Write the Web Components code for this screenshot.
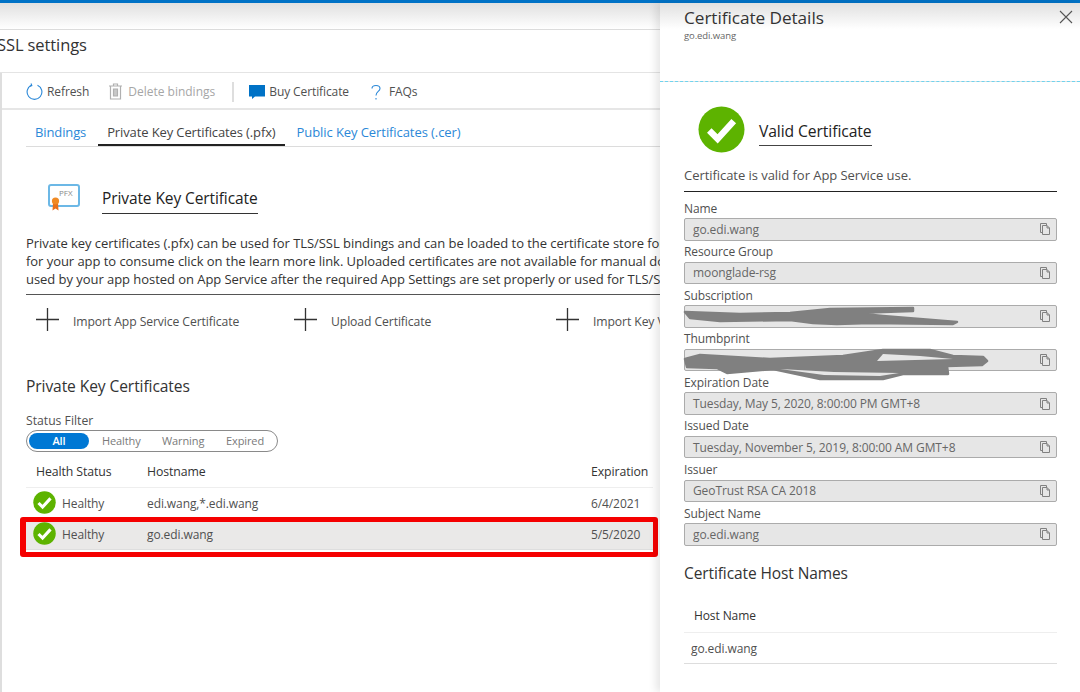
<!DOCTYPE html>
<html>
<head>
<meta charset="utf-8">
<style>
  html, body { margin: 0; height: 100%; overflow: hidden; }
  body { font-family: "Open Sans", "Liberation Sans", sans-serif; color: #3c3c3c; background: #fff; }
</style>
</head>
<body>
<ssl-app>
  <ssl-blade slot="left"></ssl-blade>
  <cert-panel slot="right"></cert-panel>
</ssl-app>

<script>
const CHECK = (size) => `<svg width="${size}" height="${size}" viewBox="0 0 48 48"><circle cx="24" cy="24" r="23.5" fill="#5db300"/><path d="M11.5 25 L20 33.5 L36.5 15.5" fill="none" stroke="#fff" stroke-width="6.5"/></svg>`;
const PLUS = `<svg width="25" height="25" viewBox="0 0 25 25"><path d="M12.500 1V24M1 12.500H24" stroke="#333" stroke-width="1.3" fill="none"/></svg>`;
const COPY = `<svg width="12" height="14" viewBox="0 0 12 14" fill="none" stroke="#808080" stroke-width="1"><path d="M7.5 3.5V1.5H1.5V10.5H3.5"/><path d="M3.5 3.5H8L10.5 6V12.5H3.5Z"/><path d="M8 3.5V6H10.5"/></svg>`;

class SslApp extends HTMLElement {
  constructor() {
    super();
    this.attachShadow({ mode: "open" });
    this.shadowRoot.innerHTML = `
      <style>
        :host { display: flex; flex-direction: column; width: 1080px; height: 692px; overflow: hidden; }
        #topbar { height: 3px; background: #0072c6; flex: none; }
        #main { display: flex; flex: 1; min-height: 0; }
        #left { width: 660px; flex: none; overflow: hidden; }
        #right { width: 420px; flex: none; box-shadow: -4px 0 8px rgba(0,0,0,.1); position: relative; background: #fff; }
      </style>
      <div id="topbar"></div>
      <div id="main">
        <div id="left"><slot name="left"></slot></div>
        <div id="right"><slot name="right"></slot></div>
      </div>
    `;
  }
}

class ToolButton extends HTMLElement {
  constructor() {
    super();
    this.attachShadow({ mode: "open" });
    this.shadowRoot.innerHTML = `
      <style>
        :host { display: flex; align-items: center; gap: 4px; font-size: 12px; letter-spacing: -.1px; color: #505050; white-space: nowrap; }
        :host([disabled]) { color: #a6a6a6; gap: 6px; letter-spacing: 0; }
      </style>
      <slot name="icon"></slot><slot></slot>
    `;
  }
}

class SslTabs extends HTMLElement {
  constructor() {
    super();
    this.attachShadow({ mode: "open" });
    this.shadowRoot.innerHTML = `
      <style>
        :host { display: flex; margin-left: 24px; border-bottom: 1px solid #dcdcdc; height: 36px; font-size: 13px; letter-spacing: -.12px; white-space: nowrap; }
        a { color: #2b88d8; padding: 0 9px 0 9px; line-height: 45px; height: 36px; box-sizing: border-box; }
        a:first-of-type { padding-right: 12px; }
        a.on { color: #444; border-bottom: 2px solid #222; }
        a:last-of-type { padding-left: 12px; letter-spacing: -.08px; }
      </style>
      <a>Bindings</a><a class="on">Private Key Certificates (.pfx)</a><a>Public Key Certificates (.cer)</a>
    `;
  }
}

class AddAction extends HTMLElement {
  constructor() {
    super();
    this.attachShadow({ mode: "open" });
    this.shadowRoot.innerHTML = `
      <style>
        :host { display: flex; align-items: center; gap: 13px; font-size: 12.2px; letter-spacing: -.1px; color: #505050; white-space: nowrap; }
        svg { display: block; }
        span { padding-top: 4px; }
      </style>
      ${PLUS}<span><slot></slot></span>
    `;
  }
}

class StatusFilter extends HTMLElement {
  constructor() {
    super();
    this.attachShadow({ mode: "open" });
    this.shadowRoot.innerHTML = `
      <style>
        :host { display: flex; align-items: center; box-sizing: border-box; width: 252px; height: 22px; border: 1px solid #8a8a8a; border-radius: 11px; padding: 0 2px; font-size: 11px; letter-spacing: -.1px; color: #7a7a7a; }
        b { width: 60px; height: 16px; border-radius: 8px; background: #0078d4; color: #fff; font-weight: 600; text-align: center; line-height: 16px; margin-right: 13px; }
        span { margin-top: -1px; }
        span:nth-of-type(1) { width: 60px; }
        span:nth-of-type(2) { width: 64px; }
      </style>
      <b>All</b><span>Healthy</span><span>Warning</span><span>Expired</span>
    `;
  }
}

class CertRow extends HTMLElement {
  constructor() {
    super();
    this.attachShadow({ mode: "open" });
    this.shadowRoot.innerHTML = `
      <style>
        :host { display: grid; grid-template-columns: 121px 444px 1fr; align-items: center; height: 31px; border-bottom: 1px solid #eee; margin-left: 24px; width: 627px; box-sizing: border-box; font-size: 12px; letter-spacing: -.1px; color: #505050; white-space: nowrap; position: relative; }
        :host([selected]) { background: #eae9e8; border-bottom-color: #dedede; }
        #status { display: flex; align-items: center; gap: 6px; padding-left: 7px; }
        svg { display: block; margin-top: -2px; }
        #mark { display: none; position: absolute; left: -6.5px; top: -2px; width: 638.5px; height: 40px; box-sizing: border-box; border: 5px solid #f50000; border-left-width: 6px; border-radius: 3px; }
        :host([selected]) #mark { display: block; }
      </style>
      <div id="status">${CHECK(23)}<span>Healthy</span></div>
      <div>${this.getAttribute("host")}</div>
      <div>${this.getAttribute("exp")}</div>
      <div id="mark"></div>
    `;
  }
}

class SslBlade extends HTMLElement {
  constructor() {
    super();
    this.attachShadow({ mode: "open" });
    this.shadowRoot.innerHTML = `
      <style>
        :host { display: block; height: 689px; }
        #gradient { height: 26px; background: linear-gradient(#e0e0e0, #fff); border-bottom: 1px solid #dcdcdc; }
        h1 { margin: 0 0 0 -3px; font-size: 16.5px; font-weight: 400; letter-spacing: -.1px; color: #333; height: 42px; line-height: 29px; border-bottom: 1px solid #e4e4e4; white-space: nowrap; }
        #body { border-left: 2px solid #dedede; height: 620px; }
        #toolbar { display: flex; align-items: center; box-sizing: content-box; height: 33px; padding: 2px 0 0 24px; border-bottom: 2px solid #e6e6e6; }
        #sep { width: 2px; height: 20px; background: #dedede; margin: 0 15px 0 17px; }
        ssl-tool + ssl-tool { margin-left: 20px; }
        #sep + ssl-tool { margin-left: 0; }
        #heading { display: flex; align-items: center; margin: 26px 0 0 46px; height: 50px; gap: 22px; }
        h2 { margin: 5px 0 0; font-size: 15.5px; font-weight: 400; letter-spacing: -.1px; color: #222; border-bottom: 1px solid #333; padding-bottom: 4px; line-height: 22px; white-space: nowrap; }
        #desc { margin: 11px 0 0 24px; font-size: 13px; line-height: 18px; letter-spacing: -.05px; color: #333; white-space: nowrap; border-bottom: 1px solid #555; padding-bottom: 6px; height: 54px; box-sizing: content-box; }
        #actions { display: grid; grid-template-columns: 258px 262px 1fr; margin: 12px 0 0 33px; height: 25px; }
        h3 { margin: 43px 0 0 24px; font-size: 15.6px; font-weight: 400; letter-spacing: -.1px; color: #333; line-height: 22px; }
        #label { margin: 17px 0 0 24px; font-size: 12.2px; line-height: 14px; color: #505050; }
        status-filter { margin: 2px 0 0 24px; }
        #heads { display: grid; grid-template-columns: 111px 444px 1fr; margin: 0 0 0 24px; width: 627px; padding: 11px 0 0 10px; box-sizing: border-box; height: 36px; line-height: 18px; font-size: 12.3px; letter-spacing: -.1px; color: #333; border-bottom: 1px solid #eee; white-space: nowrap; }
      </style>
      <div id="gradient"></div>
      <h1>SSL settings</h1>
      <div id="body">
        <div id="toolbar">
          <ssl-tool><svg slot="icon" width="17" height="17" viewBox="0 0 17 17" fill="none" stroke="#2b88d8" stroke-width="1.1"><path d="M5.5 2.2A7.4 7.4 0 1 0 11.5 2.2"/><path d="M5 .5L5.8 2.6L3.6 3.2"/></svg>Refresh</ssl-tool>
          <ssl-tool disabled><svg slot="icon" width="13" height="17" viewBox="0 0 13 17" fill="none" stroke="#b0b0b0" stroke-width="1.2"><path d="M0 3H13M4.500 3V1H8.500V3M1.500 3V16H11.500V3"/><path d="M4.500 6H8.500V13H4.500Z" fill="#c8c8c8"/></svg>Delete bindings</ssl-tool>
          <div id="sep"></div>
          <ssl-tool><svg slot="icon" width="16" height="16" viewBox="0 0 16 16"><path d="M0 1H16V12.5H6L3 15V12.5H0Z" fill="#0072c6"/></svg>Buy Certificate</ssl-tool>
          <ssl-tool><svg slot="icon" width="14" height="16" viewBox="0 0 14 16" fill="none" stroke="#2b88d8" stroke-width="1.1"><path d="M3 4.5C3 .5 11 .5 11 4.5C11 7.5 7 7.5 7 11.5"/><path d="M7 14V15.5"/></svg><span style="margin-left:2px">FAQs</span></ssl-tool>
        </div>
        <ssl-tabs></ssl-tabs>
        <div id="heading">
          <svg width="32" height="28" viewBox="0 0 32 28"><rect x="1" y="1" width="30" height="21" rx="2" fill="#fff" stroke="#6cb8e6" stroke-width="2"/><text x="11" y="12" font-size="8" fill="#8a8a8a" font-family="Open Sans">PFX</text><path d="M5 19L4.500 26.500L7.500 24.500L10.500 26.500L10 19Z" fill="#e8701a"/><circle cx="7.500" cy="17" r="3.600" fill="#f08a24"/></svg>
          <h2>Private Key Certificate</h2>
        </div>
        <div id="desc">Private key certificates (.pfx) can be used for TLS/SSL bindings and can be loaded to the certificate store for<br>for your app to consume click on the learn more link. Uploaded certificates are not available for manual down<br>used by your app hosted on App Service after the required App Settings are set properly or used for TLS/SSL</div>
        <div id="actions">
          <add-action>Import App Service Certificate</add-action>
          <add-action>Upload Certificate</add-action>
          <add-action>Import Key Vault</add-action>
        </div>
        <h3>Private Key Certificates</h3>
        <div id="label">Status Filter</div>
        <status-filter></status-filter>
        <div id="heads"><div>Health Status</div><div>Hostname</div><div>Expiration</div></div>
        <cert-row host="edi.wang,*.edi.wang" exp="6/4/2021"></cert-row>
        <cert-row host="go.edi.wang" exp="5/5/2020" selected></cert-row>
      </div>
    `;
  }
}

class CertField extends HTMLElement {
  constructor() {
    super();
    this.attachShadow({ mode: "open" });
    const scribble = this.getAttribute("scribble");
    this.shadowRoot.innerHTML = `
      <style>
        :host { display: block; height: 43.6px; font-size: 12px; letter-spacing: -.1px; color: #505050; }
        #label { height: 20.5px; line-height: 22px; }
        #box { position: relative; display: flex; align-items: center; justify-content: space-between; box-sizing: border-box; height: 22.500px; background: #e6e6e6; border: 1px solid #ababab; border-radius: 2px; padding: 0 5px 0 8px; color: #666; }
        svg.copy { display: block; }
        svg.scribble { position: absolute; left: -1px; top: -1px; overflow: visible; }
      </style>
      <div id="label">${this.getAttribute("label")}</div>
      <div id="box"><span>${this.getAttribute("value") || ""}</span>${COPY.replace("<svg", '<svg class="copy"')}${scribble ? `<svg class="scribble" width="310" height="32" viewBox="0 0 310 32" fill="#808080" stroke="#808080" stroke-width="2.5" stroke-linejoin="round">${scribble}</svg>` : ""}</div>
    `;
  }
}

class CertPanel extends HTMLElement {
  constructor() {
    super();
    this.attachShadow({ mode: "open" });
    this.shadowRoot.innerHTML = `
      <style>
        :host { display: block; height: 689px; overflow: hidden; background: #fff; }
        #head { position: relative; height: 78px; padding-left: 24px; border-bottom: 1px dashed #6fd3ee; background: linear-gradient(#e0e0e0, #fff 26px); }
        h1 { margin: 0; font-size: 17.2px; font-weight: 400; letter-spacing: -.05px; color: #333; line-height: 30px; }
        #sub { font-size: 9.500px; letter-spacing: -.1px; color: #666; line-height: 12px; margin-top: -3px; }
        #close { position: absolute; top: 7px; right: 7px; display: block; }
        #content { padding: 24px 23px 0 24px; }
        #valid { display: flex; align-items: center; gap: 14px; margin-left: 14px; height: 47px; }
        svg { display: block; }
        h2 { margin: 7px 0 0; font-size: 15.7px; font-weight: 400; letter-spacing: -.1px; color: #222; border-bottom: 1px solid #444; line-height: 22px; padding-bottom: 3px; }
        #note { margin: 12px 0 5.5px; font-size: 13px; letter-spacing: -.05px; color: #505050; line-height: 20px; padding-bottom: 6px; border-bottom: 1px solid #222; }
        h3 { margin: 15.5px 0 0; font-size: 15.5px; font-weight: 400; letter-spacing: -.1px; color: #333; line-height: 22px; }
        #hosts { font-size: 12px; letter-spacing: -.1px; color: #505050; }
        #hosts div { height: 30px; line-height: 32px; padding-left: 7px; border-bottom: 1px solid #ddd; }
        #hosts div:first-child { height: 48px; line-height: 64px; padding-left: 10px; border-bottom-color: #eee; color: #333; }
      </style>
      <div id="head">
        <h1>Certificate Details</h1>
        <div id="sub">go.edi.wang</div>
        <svg id="close" width="14" height="14" viewBox="0 0 14 14"><path d="M1 1L13 13M13 1L1 13" stroke="#555" stroke-width="1.1"/></svg>
      </div>
      <div id="content">
        <div id="valid">${CHECK(47)}<h2>Valid Certificate</h2></div>
        <div id="note">Certificate is valid for App Service use.</div>
        <cert-field label="Name" value="go.edi.wang"></cert-field>
        <cert-field label="Resource Group" value="moonglade-rsg"></cert-field>
        <cert-field label="Subscription" scribble='<path d="M1 7L56 9L106 8L146 4L229 3L229 6L169 8L199 11L273 17L269 19L186 18L153 19L129 18L106 15L36 16L6 13Z"/>'></cert-field>
        <cert-field label="Thumbprint" scribble='<path d="M1 10L16 6L86 10L159 7L199 1L246 1L269 7L299 8L303 12L298 16L263 17L264 25L219 25L199 30L136 30L89 20L43 24L33 19L3 18Z"/><path d="M199 5L236 7L269 10L193 12Z" fill="#e6e6e6" stroke="none"/><path d="M96 20L150 23L215 24L196 27L140 26Z" fill="#e6e6e6" stroke="none"/>'></cert-field>
        <cert-field label="Expiration Date" value="Tuesday, May 5, 2020, 8:00:00 PM GMT+8"></cert-field>
        <cert-field label="Issued Date" value="Tuesday, November 5, 2019, 8:00:00 AM GMT+8"></cert-field>
        <cert-field label="Issuer" value="GeoTrust RSA CA 2018"></cert-field>
        <cert-field label="Subject Name" value="go.edi.wang"></cert-field>
        <h3>Certificate Host Names</h3>
        <div id="hosts"><div>Host Name</div><div>go.edi.wang</div></div>
      </div>
    `;
  }
}

customElements.define("ssl-app", SslApp);
customElements.define("ssl-tool", ToolButton);
customElements.define("ssl-tabs", SslTabs);
customElements.define("add-action", AddAction);
customElements.define("status-filter", StatusFilter);
customElements.define("cert-row", CertRow);
customElements.define("ssl-blade", SslBlade);
customElements.define("cert-field", CertField);
customElements.define("cert-panel", CertPanel);
</script>
</body>
</html>
